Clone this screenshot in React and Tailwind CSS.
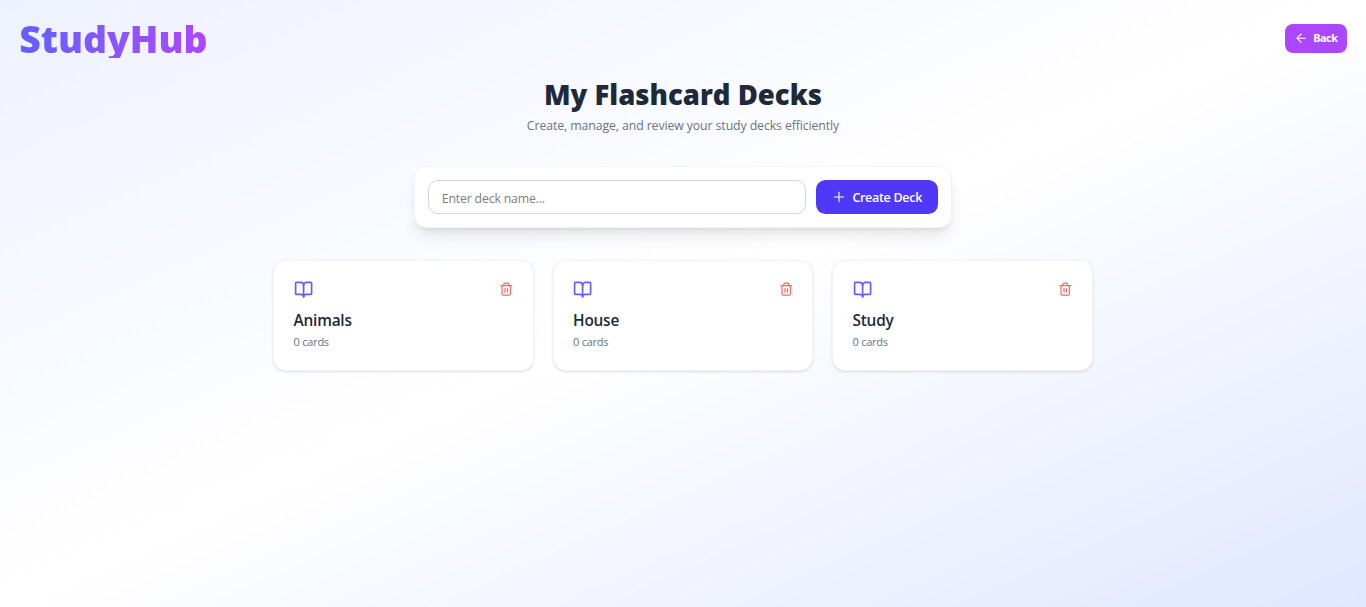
import React from "react";
import { ArrowLeft, BookOpen, Plus, Trash2 } from "lucide-react";

const decks = [
  { name: "Animals", count: 0 },
  { name: "House", count: 0 },
  { name: "Study", count: 0 },
];

function DeckCard({ deck }) {
  return (
    <div className="h-[110.4px] rounded-[12.8px] border border-gray-100 bg-white px-[19.2px] pt-[17.4px] shadow-[0_1px_3px_0_rgb(0_0_0/0.1),0_1px_2px_-1px_rgb(0_0_0/0.1)]">
      <div className="flex h-[21px] items-center justify-between">
        <BookOpen className="size-[19.2px]" color="#615fff" strokeWidth={2.1} />
        <button type="button" aria-label={"Delete " + deck.name}>
          <Trash2 className="size-[14.4px]" color="#ff6467" />
        </button>
      </div>
      <h2 className="mt-[9.6px] text-[15.4px] leading-[24px] font-semibold tracking-[-0.22px] text-gray-800">{deck.name}</h2>
      <p className="mt-[1px] text-[11px] leading-[16px] tracking-[-0.25px] text-gray-500">{deck.count} cards</p>
    </div>
  );
}

export default function App() {
  return (
    <div className="min-h-screen bg-[linear-gradient(to_bottom_right,#eef2ff,#ffffff,#e0e7ff)] font-['Open_Sans','Noto_Sans',sans-serif]">
      <header className="flex h-[77px] items-center justify-between px-[19.2px]">
        <div className="h-[38.4px] bg-linear-to-r from-[#615fff] to-[#ad46ff] bg-clip-text text-[37.4px] leading-[40.4px] font-extrabold whitespace-nowrap text-transparent">StudyHub</div>
        <button type="button" className="flex h-[28.8px] w-[62px] items-center gap-[4.8px] rounded-[8px] bg-[#ad46ff] pl-[9.2px] text-[10.8px] font-bold tracking-[-0.45px] text-white">
          <ArrowLeft className="size-[14.4px]" strokeWidth={1.8} />
          Back
        </button>
      </header>
      <main className="flex flex-col items-center">
        <h1 className="h-[38px] text-[27.5px] leading-[35px] font-extrabold whitespace-nowrap text-gray-800">My Flashcard Decks</h1>
        <p className="text-[12.3px] leading-[22px] tracking-[-0.1px] whitespace-nowrap text-gray-500">Create, manage, and review your study decks efficiently</p>
        <form className="mt-[29px] flex h-[62px] w-[537.6px] gap-[9.6px] rounded-[12.8px] border border-gray-100 bg-white p-[12.8px] shadow-[0_10px_15px_-3px_rgb(0_0_0/0.1),0_4px_6px_-4px_rgb(0_0_0/0.1)]">
          <input className="h-[34px] min-w-0 flex-1 rounded-[9.6px] border border-gray-300 px-[12.8px] pt-[3px] text-[12.3px] tracking-[-0.18px] outline-none placeholder:text-[#808080]" placeholder="Enter deck name..." />
          <button type="button" className="flex h-[34px] w-[122px] items-center gap-[5.4px] rounded-[9.6px] bg-[#4f39f6] pl-[15px] text-[12.5px] font-semibold tracking-[-0.3px] whitespace-nowrap text-white">
            <Plus className="size-[16px]" strokeWidth={1.6} />
            <span className="pt-[4px]">Create Deck</span>
          </button>
        </form>
        <section className="mt-[32.3px] grid w-[819.2px] grid-cols-3 gap-[19.2px]">
          {decks.map((deck) => <DeckCard key={deck.name} deck={deck} />)}
        </section>
      </main>
    </div>
  );
}
